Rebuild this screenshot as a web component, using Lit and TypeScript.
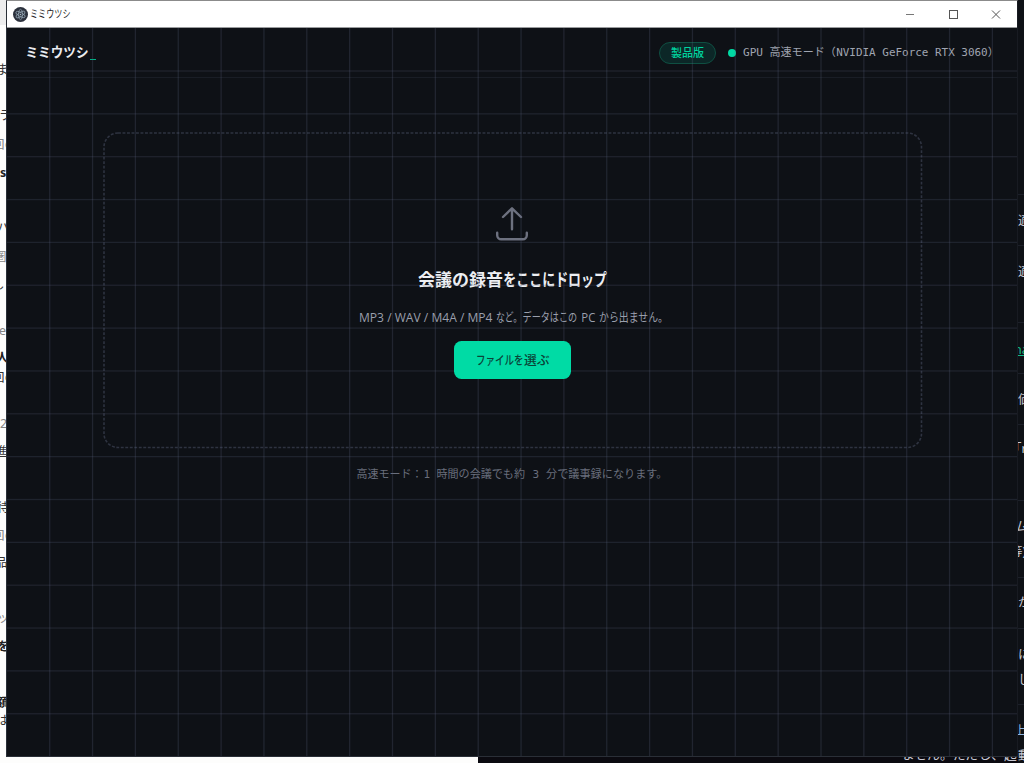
import { LitElement, html, svg, css } from "lit";
import { customElement } from "lit/decorators.js";

type Seg = [text: string, x: number, width: number];
type Scrap = [text: string, y: number, kind?: string, shift?: number];

const leftScraps: Scrap[] = [
  ["ま", 70, "", 4], ["ラ", 116, "", 1], ["回の", 145, "dim", 8], ["s", 173, "strong", 0],
  ["パ", 228, "", 3], ["圏", 257, "dim", 6], ["しま", 285, "", 8], ["e", 331, "dim", 1],
  ["人", 358, "strong", 4], ["回の", 378, "", 8], ["2", 424, "dim", 0], ["進", 452, "", 5],
  ["待", 508, "", 3], ["回の", 536, "dim", 8], ["品", 563, "", 5], ["ッ", 618, "dim", 3],
  ["を", 647, "strong", 3], ["額", 703, "strong", 4], ["は", 721, "", 4],
];
const rightScraps: Scrap[] = [
  ["適", 221], ["適", 272], ["na", 350, "link", 4], ["価", 400], ["「r", 449, "", 9], ["ム", 527, "", 3],
  ["等)", 552, "", 8], ["か", 603], ["に", 655], ["し", 680], ["上", 731, "blue", 4], ["動", 756, "", 0],
];

@customElement("app-root")
export class AppRoot extends LitElement {
  static styles = css`
    :host { display: block; width: 1024px; height: 763px; overflow: hidden; position: relative;
      background: #0e1116; font-family: "Noto Sans", "Noto Sans CJK JP", sans-serif; }
    * { box-sizing: border-box; }
    svg { display: block; flex: none; overflow: visible; }
    text { font-family: "Open Sans", "Noto Sans CJK JP", sans-serif; }
    .desk { position: absolute; inset: 0; }
    .paper { position: absolute; left: 0; top: 0; width: 478px; height: 763px; background: #fdfdfc; }
    .tab { height: 25px; background: #ededed; }
    .below { position: absolute; left: 478px; right: 6px; top: 757px; height: 6px; background: #0b0a10; overflow: hidden; }
    .below span { position: absolute; left: 424px; top: -11px; font-size: 12.8px; line-height: 17px; color: #c9c9d4; white-space: nowrap; }
    .strip { position: absolute; top: 0; height: 763px; width: 6px; overflow: hidden; }
    .strip.l { left: 0; color: #333; }
    .strip.r { right: 0; color: #c8c9d3; }
    .scrap { position: absolute; font-size: 12.5px; line-height: 18px; white-space: nowrap; }
    .strong { font-weight: 700; color: #222; }
    .dim { color: #858585; }
    .link { color: #12b886; text-decoration: underline; }
    .blue { color: #8fb4e0; }
    .rule { position: absolute; left: 0; right: 0; height: 1px; background: #1c2029; }
    .window { position: absolute; left: 6px; top: 0; width: 1012px; height: 757px; display: flex; flex-direction: column;
      border: 1px solid #2a2f37; border-top-color: #8b8b8b; border-right-color: #181b22; background: #0e1116; }
    .titlebar { height: 27px; flex: none; background: #fff; border-bottom: 1px solid #9a9c9e; display: flex; align-items: center; padding-left: 6px; }
    .titlebar .name { margin-left: 2px; flex: 1; }
    .controls { margin-right: 15px; }
    .client { flex: 1; position: relative; display: flex; flex-direction: column; min-height: 0; }
    .lines { position: absolute; left: 0; top: 0; pointer-events: none; }
    header { height: 50px; flex: none; border-bottom: 1px solid #191d25; display: flex; align-items: center; padding: 0 25px 0 19px; }
    .brand { flex: 1; display: flex; }
    .cursor { width: 6px; height: 1.4px; background: #00b387; margin: 18px 0 0 1px; }
    .pill { width: 57px; height: 22px; border-radius: 11px; border: 1px solid #0f4f42; background: #0c2727; display: flex;
      align-items: center; justify-content: center; }
    .dot { width: 8px; height: 8px; border-radius: 50%; background: #00d9a3; margin: 0 7px 0 12px; }
    .mono { font-family: "DejaVu Sans Mono", "Noto Sans CJK JP", monospace; }
    main { flex: 1; display: flex; flex-direction: column; align-items: center; padding: 54px 0 0 1px; }
    .drop { width: 820px; height: 317px; position: relative; display: flex; flex-direction: column; align-items: center; padding-top: 74px; }
    .dash { position: absolute; left: 0; top: 0; }
    .up { margin: 0 1px 25px 0; }
    .title { margin-bottom: 15px; }
    .sub { margin-bottom: 11.5px; }
    .pick { position: relative; z-index: 1; border: 0; padding: 0; width: 117px; height: 38px; border-radius: 7.5px; background: #00dba5; display: flex; align-items: center; justify-content: center; }
    .hint { margin-top: 14px; }
  `;

  private line(w: number, h: number, size: number, base: number, color: string, segs: Seg[], weight = 400, mono = false) {
    return html`<svg width=${w} height=${h}>${segs.map(([t, x, len]) => svg`<text class=${mono ? "mono" : ""} x=${x} y=${base}
      font-size=${size} font-weight=${weight} fill=${color} textLength=${len} lengthAdjust="spacingAndGlyphs">${t}</text>`)}</svg>`;
  }

  private scraps(list: Scrap[], side: string) {
    return html`<div class="strip ${side}">
      ${list.map(([t, y, kind = "", shift = 0]) => html`<span class="scrap ${kind}" style="top:${y - 9}px;left:${-shift}px">${t}</span>`)}
      ${side === "r" ? [194, 245, 322, 373, 424, 500, 577, 628, 704].map((y) => html`<i class="rule" style="top:${y}px"></i>`) : ""}
    </div>`;
  }

  render() {
    const step = 42.85;
    return html`
      <div class="desk">
        <div class="paper"><div class="tab"></div></div>
        <div class="below"><span>ません。ただし、起</span></div>
        ${this.scraps(leftScraps, "l")}${this.scraps(rightScraps, "r")}
      </div>
      <div class="window">
        <div class="titlebar">
          <svg width="15" height="15" viewBox="0 0 15 15">
            <circle cx="7.5" cy="7.5" r="7.5" fill="#2b303c" />
            <g fill="none" stroke="#91a3b1" stroke-width=".75">
              <ellipse cx="7.5" cy="7.5" rx="5.2" ry="2" transform="rotate(28 7.5 7.5)" />
              <ellipse cx="7.5" cy="7.5" rx="5.2" ry="2" transform="rotate(-32 7.5 7.5)" />
              <ellipse cx="7.5" cy="7.5" rx="5.2" ry="2" transform="rotate(90 7.5 7.5)" />
            </g>
            <circle cx="7.5" cy="7.5" r=".8" fill="#a8bac6" />
          </svg>
          <div class="name">${this.line(60, 20, 10.8, 14.2, "#222", [["ミミウツシ", 0, 40.5]])}</div>
          <svg class="controls" width="97" height="12" viewBox="0 0 97 12" fill="none" stroke="#555" stroke-width="1">
            <path d="M1 6.5h8" stroke="#777" /><rect x="44.5" y="2.5" width="8" height="8" /><path d="M87 2.5l8 8M95 2.5l-8 8" />
          </svg>
        </div>
        <div class="client">
          <header>
            <div class="brand">${this.line(63, 24, 13.2, 16.2, "#e9ebf0", [["ミミウツシ", -0.5, 63]], 700)}<div class="cursor"></div></div>
            <div class="pill">${this.line(33, 18, 10.8, 13, "#00d29e", [["製品版", 0, 33]], 500)}</div>
            <div class="dot"></div>
            ${this.line(249, 20, 11, 13.2, "#a0a5b1", [["GPU", 0, 20], ["高速モード（", 26.5, 66.3], ["NVIDIA GeForce RTX 3060", 93.2, 151.5], ["）", 244.8, 11]], 400, true)}
          </header>
          <main>
            <section class="drop">
              <svg class="dash" width="820" height="317"><rect x="1" y="1" width="817.5" height="314.5" rx="14" fill="none" stroke="#2e3340" stroke-width="1.6" stroke-dasharray="2.9 1.6" /></svg>
              <svg class="up" width="34" height="36" viewBox="0 0 34 36" fill="none" stroke="#6d717f" stroke-width="2.4" stroke-linecap="round" stroke-linejoin="round">
                <path d="M17 23.2V2.8M8 11l9-8.7L26 11M2.2 26.8v2.4a4 4 0 0 0 4 4h21.6a4 4 0 0 0 4-4v-2.4" />
              </svg>
              <div class="title">${this.line(190, 25, 17.6, 18.8, "#edeff3", [["会議の録音", 0, 85], ["をここにドロップ", 85.3, 103.7]], 700)}</div>
              <div class="sub">${this.line(308, 22, 12.2, 15.2, "#9a9fac", [["MP3 / WAV / M4A / MP4", 0, 133.5], ["など。", 137, 26], ["データはこの", 163.6, 54.5], ["PC", 222.3, 14], ["から出ません。", 240, 69]])}</div>
              <button class="pick">${this.line(74, 22, 12.4, 16, "#0a4438", [["ファイルを", 0, 47.5], ["選ぶ", 48, 25.5]], 500)}</button>
            </section>
            <div class="hint">${this.line(312, 22, 11, 15, "#696e7c", [["高速モード：", -0.5, 66], ["1", 66.5, 6.6], ["時間の会議でも約", 79.5, 88.5], ["3", 175.5, 6.6], ["分で議事録になります。", 189, 121.5]], 400, true)}</div>
          </main>
          <svg class="lines" width="1010" height="728">
            ${Array.from({ length: 23 }, (_, i) => svg`<rect x=${(i + 1) * step - 0.8} y="0" width="1.3" height="728" fill="#5b6280" fill-opacity=".25" />`)}
            ${Array.from({ length: 16 }, (_, i) => svg`<rect x="0" y=${(i + 1) * step - 0.5} width="1010" height="1.3" fill="#5b6280" fill-opacity=".22" />`)}
          </svg>
        </div>
      </div>`;
  }
}
